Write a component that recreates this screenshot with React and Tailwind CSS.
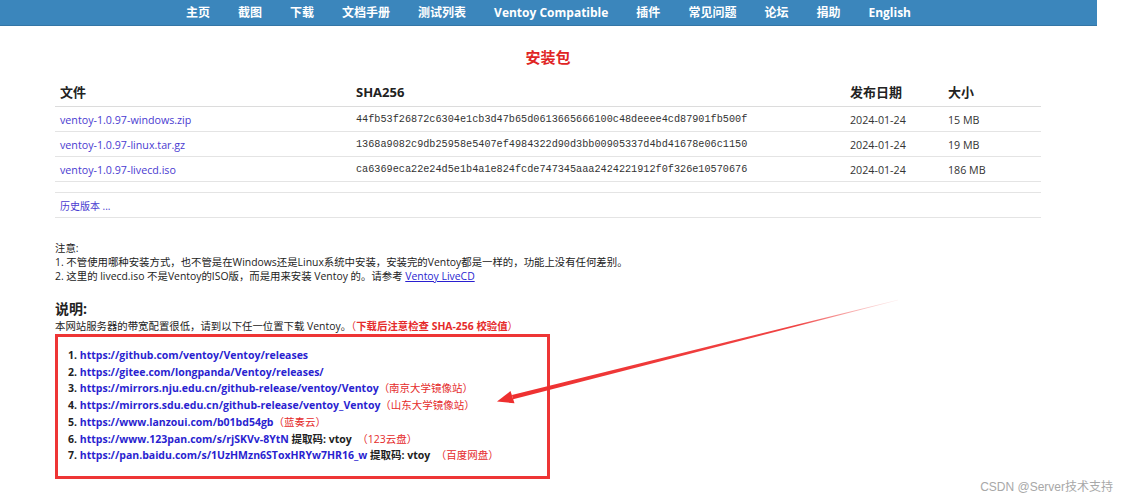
import React from "react";

const FONT = { fontFamily: '"Open Sans", "Noto Sans CJK SC", sans-serif' };

const navItems = ["主页", "截图", "下载", "文档手册", "测试列表", "Ventoy Compatible", "插件", "常见问题", "论坛", "捐助", "English"];

const files = [
  ["ventoy-1.0.97-windows.zip", "44fb53f26872c6304e1cb3d47b65d0613665666100c48deeee4cd87901fb500f", "2024-01-24", "15 MB"],
  ["ventoy-1.0.97-linux.tar.gz", "1368a9082c9db25958e5407ef4984322d90d3bb00905337d4bd41678e06c1150", "2024-01-24", "19 MB"],
  ["ventoy-1.0.97-livecd.iso", "ca6369eca22e24d5e1b4a1e824fcde747345aaa2424221912f0f326e10570676", "2024-01-24", "186 MB"],
];

const links = [
  ["https://github.com/ventoy/Ventoy/releases", null, null],
  ["https://gitee.com/longpanda/Ventoy/releases/", null, null],
  ["https://mirrors.nju.edu.cn/github-release/ventoy/Ventoy", null, "（南京大学镜像站）"],
  ["https://mirrors.sdu.edu.cn/github-release/ventoy_Ventoy", null, "（山东大学镜像站）"],
  ["https://www.lanzoui.com/b01bd54gb", null, "（蓝奏云）"],
  ["https://www.123pan.com/s/rjSKVv-8YtN", " 提取码: vtoy", "（123云盘）"],
  ["https://pan.baidu.com/s/1UzHMzn6SToxHRYw7HR16_w", " 提取码: vtoy", "（百度网盘）"],
];

export default function App() {
  return (
    <div className="relative w-[1124px] h-[500px] overflow-hidden bg-white text-[#222]" style={FONT}>
      <nav className="w-[1097px] h-[26px] bg-[#3b86bc] border-b border-[#3476a6] flex items-center justify-center gap-[28px] text-white font-bold text-[12px]">
        {navItems.map((n) => (
          <span key={n} className="leading-none">{n}</span>
        ))}
      </nav>

      <div className="ml-[55px] w-[986px]">
        <h2 className="mt-[20px] h-[22px] leading-[22px] text-center text-[15px] font-bold text-[#e02424]">安装包</h2>

        <div className="mt-[11px] text-[10.7px]">
          <div className="grid grid-cols-[296px_494px_98px_98px] h-[28px] items-center border-b border-[#dcdcdc] font-bold text-[13px] text-[#222]">
            <div className="pl-[5px]">文件</div>
            <div className="pl-[5px]">SHA256</div>
            <div className="pl-[5px]">发布日期</div>
            <div className="pl-[5px]">大小</div>
          </div>
          {files.map((f) => (
            <div key={f[0]} className="grid grid-cols-[296px_494px_98px_98px] h-[25px] items-center border-b border-[#e4e4e4] pt-[2px]">
              <div className="pl-[5px] text-[#4a3bd1]">{f[0]}</div>
              <div className="pl-[5px] text-[10.2px] text-[#333]" style={{ fontFamily: '"Liberation Mono", monospace' }}>{f[1]}</div>
              <div className="pl-[5px] text-[#333]">{f[2]}</div>
              <div className="pl-[5px] text-[#333]">{f[3]}</div>
            </div>
          ))}
          <div className="h-[11px] border-b border-[#e4e4e4]" />
          <div className="h-[25px] flex items-center pl-[5px] pt-[2px] border-b border-[#e4e4e4] text-[10px] text-[#4a3bd1]">历史版本 ...</div>
        </div>

        <div className="mt-[23px] text-[10.4px] leading-[14px] text-[#222]">
          <div>注意:</div>
          <div>1. 不管使用哪种安装方式，也不管是在Windows还是Linux系统中安装，安装完的Ventoy都是一样的，功能上没有任何差别。</div>
          <div>
            2. 这里的 livecd.iso 不是Ventoy的ISO版，而是用来安装 Ventoy 的。请参考{" "}
            <span className="text-[#2a1fd0] underline">Ventoy LiveCD</span>
          </div>
        </div>

        <div className="mt-[17px] text-[14px] font-bold leading-[18px]">说明:</div>
        <div className="text-[10.4px] leading-[16px] text-[#222]">
          本网站服务器的带宽配置很低，请到以下任一位置下载 Ventoy。
          <span className="text-[#e52b2b]">（<span className="font-bold">下载后注意检查 SHA-256 校验值</span>）</span>
        </div>

        <div className="w-[495px] border-[3px] border-[#ee3535] pt-[10px] pb-[12px] pl-[10px] text-[10.5px] font-bold leading-[16.7px]">
          {links.map((l, i) => (
            <div key={i} className="whitespace-nowrap">
              <span className="text-[#222]">{i + 1}. </span>
              <span className="text-[#2a1fd0]">{l[0]}</span>
              {l[1] && <span className="text-[#222]">{l[1]}</span>}
              {l[1] && <span>&nbsp;&nbsp;</span>}
              {l[2] && <span className="font-normal text-[#e52b2b]">{l[2]}</span>}
            </div>
          ))}
        </div>
      </div>

      <svg className="absolute inset-0 pointer-events-none" width="1124" height="500" viewBox="0 0 1124 500">
        <defs>
          <linearGradient id="fade" x1="497" y1="401" x2="898" y2="300" gradientUnits="userSpaceOnUse">
            <stop offset="0" stopColor="#ee2f2f" stopOpacity="1" />
            <stop offset="0.75" stopColor="#ee2f2f" stopOpacity="0.9" />
            <stop offset="1" stopColor="#f06a6a" stopOpacity="0.1" />
          </linearGradient>
        </defs>
        <polygon points="513.1,399.2 511.9,395.0 897.9,299.7 898.1,300.3" fill="url(#fade)" />
        <polygon points="497,401.5 514.5,403.3 510.5,391.0" fill="#ee2f2f" />
      </svg>

      <div className="absolute right-[11px] bottom-[4px] text-[12px] text-[#a8a8a8]" style={{ fontFamily: '"Liberation Sans", "Noto Sans CJK SC", sans-serif' }}>
        CSDN @Server技术支持
      </div>
    </div>
  );
}
